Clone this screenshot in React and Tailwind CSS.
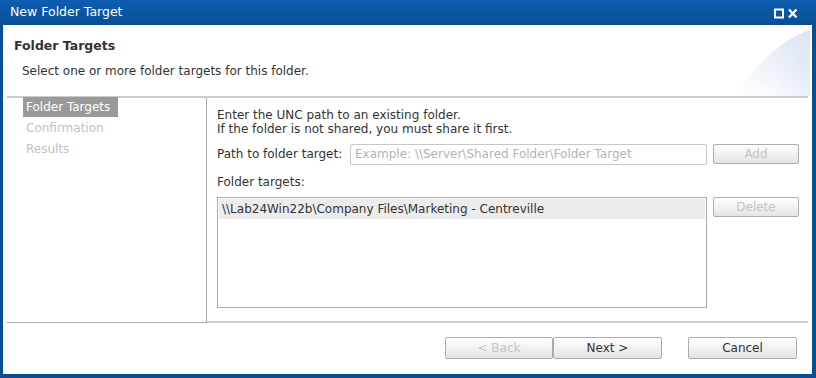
import React from "react";

const font = { fontFamily: '"DejaVu Sans", Verdana, sans-serif' };

function Btn({ children, disabled, className = "" }) {
  return (
    <div
      className={
        "flex items-center justify-center rounded-[2px] border border-[#acacac] bg-gradient-to-b from-[#ffffff] to-[#e4e4e4] text-[12px] " +
        (disabled ? "text-[#c4c4c4] " : "text-[#333] ") +
        className
      }
    >
      {children}
    </div>
  );
}

export default function App() {
  return (
    <div
      className="w-[816px] h-[378px] bg-[#0a4f96] flex flex-col pl-[3px] pr-[4px] pb-[4px] overflow-hidden"
      style={font}
    >
      {/* title bar */}
      <div className="h-[25px] shrink-0 flex items-center bg-gradient-to-b from-[#0d5db0] to-[#0a4f96] -ml-[3px] -mr-[4px] pl-[10px] pr-[16px]">
        <span className="text-white text-[12.5px] flex-1">New Folder Target</span>
        <svg width="26" height="11" viewBox="0 0 26 11" className="mt-[1px]">
          <rect x="1" y="1.5" width="8" height="8" fill="none" stroke="white" strokeWidth="2" />
          <path d="M15 1.5 L22.5 9.5 M22.5 1.5 L15 9.5" stroke="white" strokeWidth="2.2" />
        </svg>
      </div>

      <div className="flex-1 bg-white flex flex-col">
        {/* header */}
        <div className="relative h-[71px] shrink-0 overflow-hidden">
          <svg
            className="absolute right-[2px] top-[3px]"
            width="76"
            height="68"
            viewBox="0 0 76 68"
          >
            <defs>
              <linearGradient id="g1" x1="0" y1="1" x2="1" y2="0">
                <stop offset="0" stopColor="#ffffff" />
                <stop offset="1" stopColor="#dbe3f3" />
              </linearGradient>
              <linearGradient id="g2" x1="0" y1="1" x2="1" y2="0.3">
                <stop offset="0" stopColor="#ffffff" />
                <stop offset="1" stopColor="#e0e7f5" />
              </linearGradient>
            </defs>
            <path d="M0 68 C 20 40, 45 12, 76 2 L76 68 Z" fill="url(#g1)" />
            <path d="M22 68 C 36 48, 55 32, 76 26 L76 68 Z" fill="url(#g2)" opacity="0.8" />
          </svg>
          <div className="relative pl-[11px] pt-[12px] text-[12.5px] font-bold text-[#333]">
            Folder Targets
          </div>
          <div className="relative pl-[19px] pt-[6px] text-[12px] text-[#333]">
            Select one or more folder targets for this folder.
          </div>
        </div>
        <div className="mx-[4px] h-[2px] bg-[#cccccc] shrink-0" />

        {/* body */}
        <div className="flex h-[225px] shrink-0 mx-[4px]">
          <div className="w-[200px] shrink-0 border-r border-[#aaaaaa] border-b border-b-[#aaaaaa] pl-[16px] text-[12px] flex flex-col">
            <div className="w-[95px] h-[20px] bg-[#9a9a9a] text-white flex items-center pl-[3px] -mt-[1px]">
              Folder Targets
            </div>
            <div className="h-[21px] flex items-center pl-[3px] text-[#c2c2c2]">Confirmation</div>
            <div className="h-[21px] flex items-center pl-[3px] text-[#c2c2c2]">Results</div>
          </div>
          <div className="flex-1 border-b-2 border-[#cccccc] pl-[10px] pt-[10px] text-[12px] text-[#333] flex flex-col">
            <div className="leading-[14px]">Enter the UNC path to an existing folder.</div>
            <div className="leading-[14px]">If the folder is not shared, you must share it first.</div>
            <div className="flex items-center mt-[7px] h-[22px]">
              <span className="w-[133px] shrink-0">Path to folder target:</span>
              <div className="w-[357px] h-[21px] border border-[#c8c8c8] rounded-[2px] flex items-center pl-[4px] text-[#b4b4b4]">
                Example: \\Server\Shared Folder\Folder Target
              </div>
              <Btn disabled className="ml-[6px] w-[86px] h-[20px]">Add</Btn>
            </div>
            <div className="mt-[10px] h-[14px] leading-[14px]">Folder targets:</div>
            <div className="flex mt-[8px]">
              <div className="w-[490px] h-[111px] border border-[#aaaaaa] p-[1px]">
                <div className="h-[20px] bg-[#ececec] flex items-center pl-[3px]">
                  \\Lab24Win22b\Company Files\Marketing - Centreville
                </div>
              </div>
              <Btn disabled className="ml-[6px] w-[86px] h-[20px]">Delete</Btn>
            </div>
          </div>
        </div>

        {/* footer */}
        <div className="flex-1 flex items-start pt-[14px]">
          <div className="flex ml-[442px]">
            <Btn disabled className="w-[108px] h-[22px]">&lt; Back</Btn>
            <Btn className="w-[109px] h-[22px]">Next &gt;</Btn>
            <Btn className="w-[109px] h-[22px] ml-[26px]">Cancel</Btn>
          </div>
        </div>
      </div>
    </div>
  );
}
